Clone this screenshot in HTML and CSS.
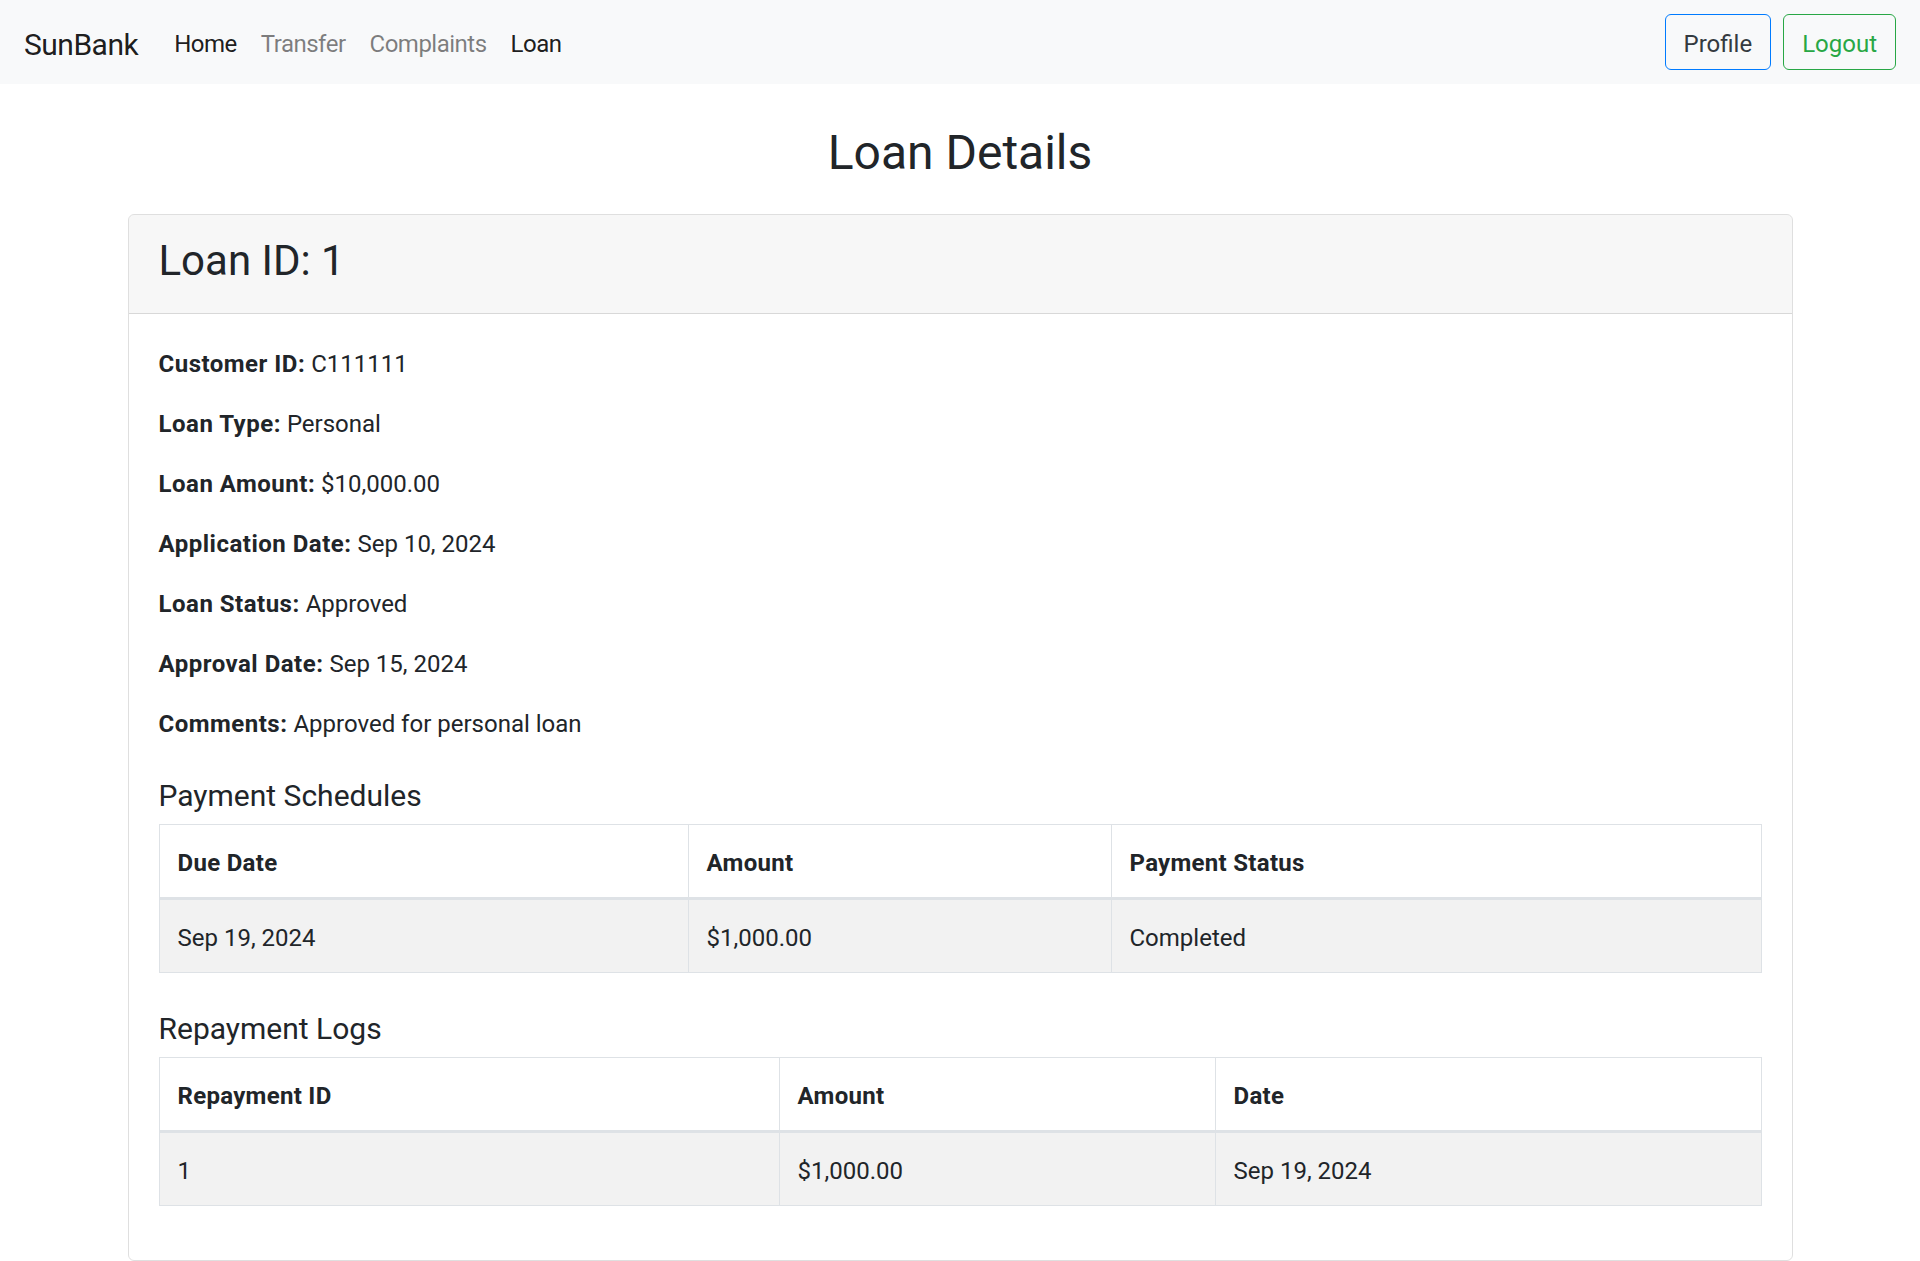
FILE: index.html
```html
<!DOCTYPE html>
<html lang="en">
<head>
<meta charset="utf-8">
<title>Loan Details - SunBank</title>
<link rel="stylesheet" href="styles.css">
</head>
<body>
<nav class="navbar">
  <a class="brand" href="#">SunBank</a>
  <ul class="nav">
    <li><a class="nav-link active" href="#">Home</a></li>
    <li><a class="nav-link" href="#">Transfer</a></li>
    <li><a class="nav-link" href="#">Complaints</a></li>
    <li><a class="nav-link active" href="#">Loan</a></li>
  </ul>
  <div class="nav-actions">
    <a class="btn btn-profile" href="#">Profile</a>
    <a class="btn btn-logout" href="#">Logout</a>
  </div>
</nav>

<main class="container">
  <h2 class="page-title">Loan Details</h2>
  <section class="card">
    <div class="card-header">
      <h3 class="card-title">Loan ID: 1</h3>
    </div>
    <div class="card-body">
      <p><strong>Customer ID:</strong> C111111</p>
      <p><strong>Loan Type:</strong> Personal</p>
      <p><strong>Loan Amount:</strong> $10,000.00</p>
      <p><strong>Application Date:</strong> Sep 10, 2024</p>
      <p><strong>Loan Status:</strong> Approved</p>
      <p><strong>Approval Date:</strong> Sep 15, 2024</p>
      <p><strong>Comments:</strong> Approved for personal loan</p>

      <h5 class="section-title">Payment Schedules</h5>
      <table class="data-table">
        <colgroup>
          <col class="c-due">
          <col class="c-amt1">
          <col>
        </colgroup>
        <thead>
          <tr><th>Due Date</th><th>Amount</th><th>Payment Status</th></tr>
        </thead>
        <tbody>
          <tr><td>Sep 19, 2024</td><td>$1,000.00</td><td>Completed</td></tr>
        </tbody>
      </table>

      <h5 class="section-title">Repayment Logs</h5>
      <table class="data-table">
        <colgroup>
          <col class="c-rid">
          <col class="c-amt2">
          <col>
        </colgroup>
        <thead>
          <tr><th>Repayment ID</th><th>Amount</th><th>Date</th></tr>
        </thead>
        <tbody>
          <tr><td>1</td><td>$1,000.00</td><td>Sep 19, 2024</td></tr>
        </tbody>
      </table>
    </div>
  </section>
</main>
</body>
</html>
```

FILE: styles.css
```css
* {
  box-sizing: border-box;
}

html, body {
  margin: 0;
  padding: 0;
}

body {
  font-family: Roboto, "Open Sans", "Liberation Sans", sans-serif;
  font-size: 24px;
  line-height: 36px;
  color: #212529;
  background: #ffffff;
}

a {
  text-decoration: none;
}

/* Navbar */
.navbar {
  display: flex;
  align-items: center;
  height: 84px;
  padding: 12px 24px;
  background: #f8f9fa;
}

.brand {
  font-size: 30px;
  line-height: 45px;
  padding: 9.5px 0 5.5px;
  margin-right: 24px;
  letter-spacing: -0.5px;
  color: rgba(0, 0, 0, 0.9);
}

.nav {
  display: flex;
  list-style: none;
  margin: 0;
  padding: 0;
}

.nav-link {
  display: block;
  padding: 14px 12px 10px;
  letter-spacing: -0.5px;
  color: rgba(0, 0, 0, 0.5);
}

.nav-link.active {
  color: rgba(0, 0, 0, 0.9);
}

.nav-actions {
  margin-left: auto;
  display: flex;
  gap: 12px;
}

.btn {
  display: inline-block;
  padding: 11px 18px 7px;
  line-height: 36px;
  border: 1px solid transparent;
  border-radius: 6px;
  font-size: 24px;
}

.btn-profile {
  border-color: #007bff;
  color: #343a40;
}

.btn-logout {
  border-color: #28a745;
  color: #28a745;
}

/* Content */
.container {
  width: 1710px;
  margin: 36px auto 0;
  padding: 0 22.5px;
}

.page-title {
  margin: 0 0 32.5px;
  padding-top: 3.5px;
  text-align: center;
  font-size: 48px;
  line-height: 57.6px;
  font-weight: 400;
}

.card {
  border: 1px solid rgba(0, 0, 0, 0.125);
  border-radius: 6px;
  overflow: hidden;
}

.card-header {
  padding: 18px 30px;
  background: rgba(0, 0, 0, 0.03);
  border-bottom: 1px solid rgba(0, 0, 0, 0.125);
}

.card-title {
  margin: 0 0 9px;
  padding-top: 3px;
  font-size: 42px;
  line-height: 50.4px;
  font-weight: 400;
}

.card-body {
  padding: 30px;
}

.card-body p {
  margin: 0 0 22px;
  padding-top: 2px;
}

.card-body strong {
  font-weight: 700;
  letter-spacing: 0.5px;
}

.section-title {
  margin: 36px 0 10px;
  padding-top: 2px;
  font-size: 30px;
  line-height: 36px;
  font-weight: 400;
}

p + .section-title {
  margin-top: 34px;
}

.data-table {
  width: 100%;
  table-layout: fixed;
  border-collapse: collapse;
  margin-bottom: 24px;
  border: 1px solid #dee2e6;
}

.data-table th,
.data-table td {
  padding: 20px 18px 16px;
  text-align: left;
  border: 1px solid #dee2e6;
  vertical-align: top;
}

.data-table th {
  font-weight: 700;
  letter-spacing: 0.3px;
}

.data-table thead th {
  border-bottom: 3px solid #dee2e6;
}

.data-table tbody tr {
  background: #f2f2f2;
}

.c-due { width: 529px; }
.c-amt1 { width: 423px; }
.c-rid { width: 620px; }
.c-amt2 { width: 436px; }
```
